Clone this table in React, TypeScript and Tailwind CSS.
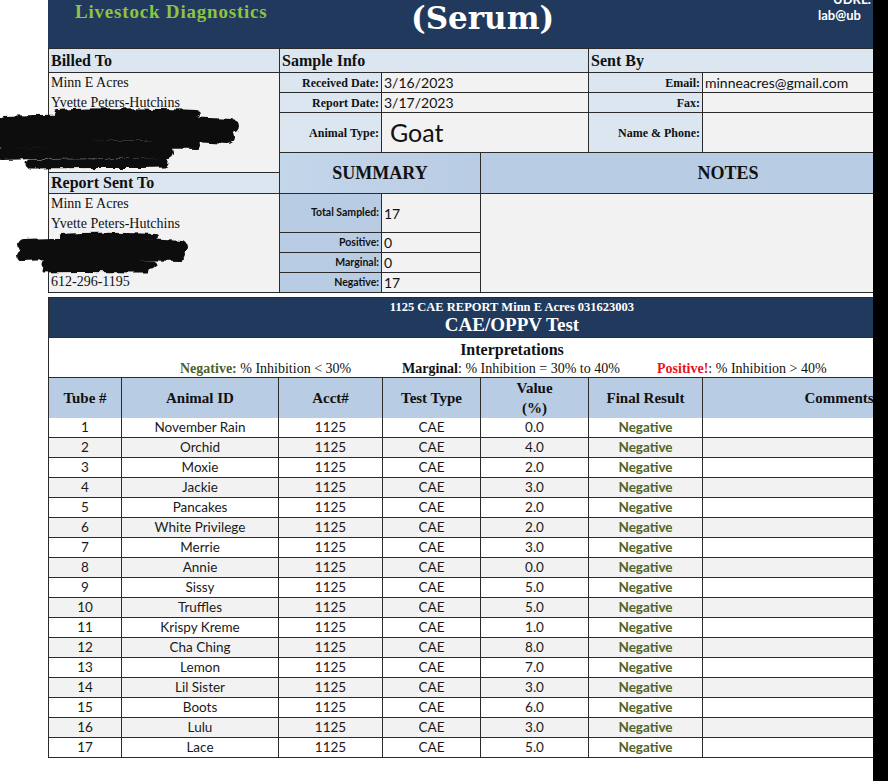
import React from "react";

const SERIF = "font-['Liberation_Serif','Times_New_Roman',serif]";
const SANS = "font-['Lato','Open_Sans',sans-serif]";

const animals: [number, string, string][] = [
  [1, "November Rain", "0.0"],
  [2, "Orchid", "4.0"],
  [3, "Moxie", "2.0"],
  [4, "Jackie", "3.0"],
  [5, "Pancakes", "2.0"],
  [6, "White Privilege", "2.0"],
  [7, "Merrie", "3.0"],
  [8, "Annie", "0.0"],
  [9, "Sissy", "5.0"],
  [10, "Truffles", "5.0"],
  [11, "Krispy Kreme", "1.0"],
  [12, "Cha Ching", "8.0"],
  [13, "Lemon", "7.0"],
  [14, "Lil Sister", "3.0"],
  [15, "Boots", "6.0"],
  [16, "Lulu", "3.0"],
  [17, "Lace", "5.0"],
];

interface CellProps {
  className: string;
  children?: React.ReactNode;
}

// label cell, right aligned bold serif
const Label: React.FC<CellProps> = ({ className, children }) => (
  <div
    className={`flex items-center justify-end bg-[#dce6f1] pr-[2px] text-[12px] font-bold text-[#111] ${SERIF} ${className}`}
  >
    {children}
  </div>
);

const SumLabel: React.FC<CellProps> = ({ className, children }) => (
  <div
    className={`flex items-center justify-end bg-[#b8cce4] pr-[2px] text-[10.5px] font-bold text-[#111] ${SANS} ${className}`}
  >
    {children}
  </div>
);

const Value: React.FC<CellProps> = ({ className, children }) => (
  <div className={`flex items-center bg-[#f2f2f2] pl-[2px] text-[14px] text-[#111] ${SANS} ${className}`}>
    {children}
  </div>
);

// marker scribbles over the address lines
const Redactions = () => (
  <>
    <svg className="pointer-events-none absolute left-0 top-[98px]" width="245" height="82" viewBox="0 0 245 82">
      <defs>
        <filter id="rough1" x="-10%" y="-30%" width="120%" height="160%">
          <feTurbulence type="fractalNoise" baseFrequency="0.12" numOctaves="2" seed="4" />
          <feDisplacementMap in="SourceGraphic" scale="5" />
        </filter>
      </defs>
      <g filter="url(#rough1)" stroke="#0b0b0b" strokeLinecap="round" fill="none">
        <path d="M58 16 C90 13 140 14 196 16" strokeWidth="8" />
        <path d="M4 25 C60 22 150 24 232 28" strokeWidth="14" />
        <path d="M2 37 C70 34 160 35 228 39" strokeWidth="14" />
        <path d="M2 46 C50 45 120 46 196 47" strokeWidth="8" />
        <path d="M2 56 C50 54 110 55 168 55" strokeWidth="12" />
        <path d="M30 66 C80 65 130 66 164 65" strokeWidth="9" />
      </g>
    </svg>
    <svg className="pointer-events-none absolute left-0 top-[226px]" width="200" height="60" viewBox="0 0 200 60">
      <defs>
        <filter id="rough2" x="-10%" y="-30%" width="120%" height="160%">
          <feTurbulence type="fractalNoise" baseFrequency="0.12" numOctaves="2" seed="9" />
          <feDisplacementMap in="SourceGraphic" scale="5" />
        </filter>
      </defs>
      <g filter="url(#rough2)" stroke="#0b0b0b" strokeLinecap="round" fill="none">
        <path d="M62 11 C90 9 130 10 156 11" strokeWidth="6" />
        <path d="M24 19 C70 17 130 18 182 21" strokeWidth="12" />
        <path d="M22 29 C70 27 130 28 180 29" strokeWidth="12" />
        <path d="M46 38 C80 37 120 38 152 39" strokeWidth="9" />
        <path d="M44 44 C80 43 120 44 146 44" strokeWidth="5" />
      </g>
    </svg>
  </>
);

const InfoGrid = () => (
  <div className="grid w-[928px] grid-cols-[230px_101px_98px_107px_113px_272px] grid-rows-[23px_19px_19px_39px_19px_20px_38px_19px_19px_19px] gap-px bg-[#2b2b2b] p-px">
    {/* left column */}
    <div className={`col-start-1 row-start-1 flex items-center bg-[#dce6f1] pl-[2px] text-[16px] font-bold text-[#111] ${SERIF}`}>
      Billed To
    </div>
    <div className={`col-start-1 row-start-2 row-span-4 bg-[#f2f2f2] pl-[2px] text-[14px] leading-[20px] text-[#111] ${SERIF}`}>
      <div>Minn E Acres</div>
      <div>Yvette Peters-Hutchins</div>
    </div>
    <div className={`col-start-1 row-start-6 flex items-center bg-[#dce6f1] pl-[2px] text-[16px] font-bold text-[#111] ${SERIF}`}>
      Report Sent To
    </div>
    <div className={`col-start-1 row-start-7 row-span-4 flex flex-col bg-[#f2f2f2] pl-[2px] text-[14px] leading-[20px] text-[#111] ${SERIF}`}>
      <div>Minn E Acres</div>
      <div>Yvette Peters-Hutchins</div>
      <div className="h-[40px]" />
      <div className="-mt-px">612-296-1195</div>
    </div>

    {/* sample info */}
    <div className={`col-start-2 col-span-3 row-start-1 flex items-center bg-[#dce6f1] pl-[2px] text-[16px] font-bold text-[#111] ${SERIF}`}>
      Sample Info
    </div>
    <Label className="col-start-2 row-start-2">Received Date:</Label>
    <Value className="col-start-3 col-span-2 row-start-2">3/16/2023</Value>
    <Label className="col-start-2 row-start-3">Report Date:</Label>
    <Value className="col-start-3 col-span-2 row-start-3">3/17/2023</Value>
    <Label className="col-start-2 row-start-4">Animal Type:</Label>
    <Value className="col-start-3 col-span-2 row-start-4 pl-[8px] text-[25px]">Goat</Value>

    {/* summary */}
    <div className={`col-start-2 col-span-2 row-start-5 row-span-2 flex items-center justify-center bg-gradient-to-r from-[#c4d6ea] to-[#b8cce4] text-[18px] font-bold text-[#111] ${SERIF}`}>
      SUMMARY
    </div>
    <SumLabel className="col-start-2 row-start-7">Total Sampled:</SumLabel>
    <Value className="col-start-3 row-start-7">17</Value>
    <SumLabel className="col-start-2 row-start-8">Positive:</SumLabel>
    <Value className="col-start-3 row-start-8">0</Value>
    <SumLabel className="col-start-2 row-start-9">Marginal:</SumLabel>
    <Value className="col-start-3 row-start-9">0</Value>
    <SumLabel className="col-start-2 row-start-10">Negative:</SumLabel>
    <Value className="col-start-3 row-start-10">17</Value>

    {/* sent by */}
    <div className={`col-start-5 col-span-2 row-start-1 flex items-center bg-[#dce6f1] pl-[2px] text-[16px] font-bold text-[#111] ${SERIF}`}>
      Sent By
    </div>
    <Label className="col-start-5 row-start-2">Email:</Label>
    <Value className="col-start-6 row-start-2">minneacres@gmail.com</Value>
    <Label className="col-start-5 row-start-3">Fax:</Label>
    <Value className="col-start-6 row-start-3" />
    <Label className="col-start-5 row-start-4">Name &amp; Phone:</Label>
    <Value className="col-start-6 row-start-4" />

    {/* notes */}
    <div className={`col-start-4 col-span-3 row-start-5 row-span-2 flex items-center justify-center bg-[#b8cce4] text-[18px] font-bold text-[#111] ${SERIF}`}>
      NOTES
    </div>
    <div className="col-start-4 col-span-3 row-start-7 row-span-4 bg-[#f2f2f2]" />
  </div>
);

const ResultsTable = () => (
  <div className="mt-[4px] flex w-[928px] flex-col gap-px bg-[#2b2b2b] p-px">
    <div className={`flex h-[39px] flex-col items-center bg-[#21395c] text-white ${SERIF}`}>
      <div className="mt-[2px] text-[12.5px] font-bold leading-[15px]">1125 CAE REPORT Minn E Acres 031623003</div>
      <div className="text-[19px] font-bold leading-[20px]">CAE/OPPV Test</div>
    </div>
    <div className={`h-[39px] bg-white text-[#111] ${SERIF}`}>
      <div className="pt-[2px] text-center text-[16px] font-bold leading-[20px]">Interpretations</div>
      <div className="flex pl-[131px] text-[14px] leading-[18px]">
        <div className="w-[222px]">
          <span className="font-bold text-[#4f6228]">Negative:</span> % Inhibition &lt; 30%
        </div>
        <div className="w-[255px]">
          <span className="font-bold">Marginal</span>: % Inhibition = 30% to 40%
        </div>
        <div>
          <span className="font-bold text-[#e8131b]">Positive!</span>: % Inhibition &gt; 40%
        </div>
      </div>
    </div>
    <div className={`grid h-[39px] grid-cols-[72px_156px_103px_97px_107px_113px_272px] gap-px text-[15px] font-bold text-[#111] ${SERIF}`}>
      <div className="flex items-center justify-center bg-[#b8cce4]">Tube #</div>
      <div className="flex items-center justify-center bg-[#b8cce4]">Animal ID</div>
      <div className="flex items-center justify-center bg-[#b8cce4]">Acct#</div>
      <div className="flex items-center justify-center bg-[#b8cce4]">Test Type</div>
      <div className="flex flex-col items-center justify-center bg-[#b8cce4] leading-[20px]">
        <span>Value</span>
        <span>(%)</span>
      </div>
      <div className="flex items-center justify-center bg-[#b8cce4]">Final Result</div>
      <div className="flex items-center justify-center whitespace-nowrap bg-[#b8cce4]">Comments</div>
    </div>
    {animals.map(([tube, name, value]) => {
      const bg = tube % 2 === 0 ? "bg-[#f2f2f2]" : "bg-white";
      return (
        <div
          key={tube}
          className={`grid h-[19px] grid-cols-[72px_156px_103px_97px_107px_113px_272px] gap-px text-center text-[13.5px] leading-[19px] text-[#1a1a1a] ${SANS}`}
        >
          <div className={bg}>{tube}</div>
          <div className={bg}>{name}</div>
          <div className={bg}>1125</div>
          <div className={bg}>CAE</div>
          <div className={bg}>{value}</div>
          <div className={`${bg} font-bold text-[#4f6228]`}>Negative</div>
          <div className={bg} />
        </div>
      );
    })}
  </div>
);

const App: React.FC = () => {
  return (
    <div className="flex h-[781px] w-[888px] overflow-hidden bg-white">
      <div className="relative h-full w-[873px] overflow-hidden">
        <div className="w-[976px] pl-[48px]">
          <div className="flex h-[48px] w-[928px] bg-[#21395c]">
            <div className={`ml-[27px] w-[336px] pt-[2px] text-[19px] font-bold leading-[20px] tracking-[0.8px] text-[#8dc442] ${SERIF}`}>
              Livestock Diagnostics
            </div>
            <div className="w-[407px] font-['DejaVu_Serif',serif] text-[31px] font-bold leading-[37px] text-white">
              (Serum)
            </div>
            <div className={`flex flex-col text-[13px] font-bold leading-[15px] text-white ${SANS}`}>
              <span className="-mt-[8px] ml-[15px]">UDRL.</span>
              <span className="mt-[1px]">lab@ub</span>
            </div>
          </div>
          <InfoGrid />
          <ResultsTable />
        </div>
        <Redactions />
      </div>
      <div className="h-full w-[15px] bg-black" />
    </div>
  );
};

export default App;
